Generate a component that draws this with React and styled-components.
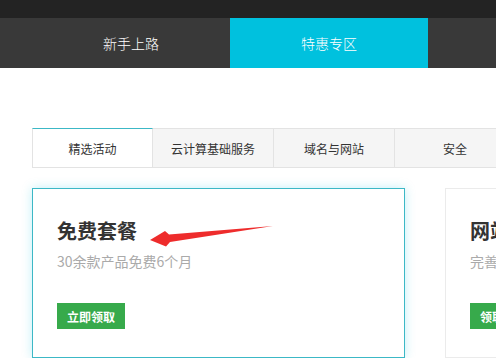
import React from "react";
import styled, { createGlobalStyle } from "styled-components";

const GlobalStyle = createGlobalStyle`
  body {
    margin: 0;
    background: #fff;
    font-family: "Noto Sans CJK SC", "Noto Sans", sans-serif;
    overflow: hidden;
  }
`;

const navItems = [
  { label: "新手上路" },
  { label: "特惠专区", active: true },
];

const tabs = [
  { label: "精选活动", active: true },
  { label: "云计算基础服务" },
  { label: "域名与网站" },
  { label: "安全" },
];

const cards = [
  {
    title: "免费套餐",
    desc: "30余款产品免费6个月",
    btn: "立即领取",
    active: true,
  },
  {
    title: "网站建设",
    desc: "完善建站服务一站解决",
    btn: "领取优惠",
  },
];

function Arrow() {
  return (
    <ArrowSvg width="130" height="30" viewBox="0 0 130 30">
      <path
        d="M3 21 L18 12 L22 15.5 L126 7 L23 23 L19 27.5 Z"
        fill="#ee2c2c"
      />
    </ArrowSvg>
  );
}

function App() {
  return (
    <Page>
      <GlobalStyle />
      <TopBar />
      <Nav>
        {navItems.map((n) => (
          <NavItem key={n.label} $active={n.active}>
            {n.label}
          </NavItem>
        ))}
      </Nav>
      <Main>
        <Tabs>
          {tabs.map((t) => (
            <Tab key={t.label} $active={t.active}>
              {t.label}
            </Tab>
          ))}
        </Tabs>
        <Cards>
          {cards.map((c) => (
            <Card key={c.title} $active={c.active}>
              <Title>{c.title}</Title>
              <Desc>{c.desc}</Desc>
              <Button>{c.btn}</Button>
              {c.active && <Arrow />}
            </Card>
          ))}
        </Cards>
      </Main>
    </Page>
  );
}

export default App;

const Page = styled.div`
  width: 496px;
  height: 358px;
  overflow: hidden;
`;

const TopBar = styled.div`
  height: 18px;
  background: #232323;
`;

const Nav = styled.div`
  display: flex;
  height: 50px;
  padding-left: 32px;
  background: #393939;
`;

const NavItem = styled.div`
  flex: 0 0 198px;
  display: flex;
  align-items: center;
  justify-content: center;
  font-size: 14px;
  font-weight: 300;
  color: #fff;
  background: ${(p) => (p.$active ? "#00c1de" : "transparent")};
`;

const Main = styled.div`
  padding: 60px 0 0 32px;
`;

const Tabs = styled.div`
  display: flex;
  width: 600px;
`;

const Tab = styled.div`
  flex: 0 0 121px;
  box-sizing: border-box;
  height: 40px;
  display: flex;
  align-items: center;
  justify-content: center;
  font-size: 12px;
  color: #333;
  background: ${(p) => (p.$active ? "#fff" : "#f5f5f5")};
  border: 1px solid #e3e3e3;
  border-left: ${(p) => (p.$active ? "1px solid #e3e3e3" : "none")};
  border-top: 1px solid ${(p) => (p.$active ? "#3cb8c6" : "#e3e3e3")};
`;

const Cards = styled.div`
  display: flex;
  gap: 40px;
  margin-top: 20px;
  width: 900px;
`;

const Card = styled.div`
  position: relative;
  flex: 0 0 373px;
  box-sizing: border-box;
  height: 170px;
  padding: 28px 24px 0;
  border: 1px solid ${(p) => (p.$active ? "#3cb8c6" : "#ebebeb")};
  box-shadow: ${(p) => (p.$active ? "0 0 10px rgba(0, 193, 222, 0.25)" : "none")};
  background: #fff;
`;

const Title = styled.div`
  font-size: 20px;
  font-weight: 700;
  line-height: 28px;
  color: #333;
`;

const Desc = styled.div`
  margin-top: 6px;
  font-size: 14px;
  line-height: 20px;
  color: #aaa;
`;

const Button = styled.div`
  display: inline-flex;
  align-items: center;
  justify-content: center;
  margin-top: 32px;
  width: 68px;
  height: 26px;
  background: #37aa4b;
  color: #fff;
  font-size: 12px;
  font-weight: 700;
`;

const ArrowSvg = styled.svg`
  position: absolute;
  left: 114px;
  top: 30px;
`;
